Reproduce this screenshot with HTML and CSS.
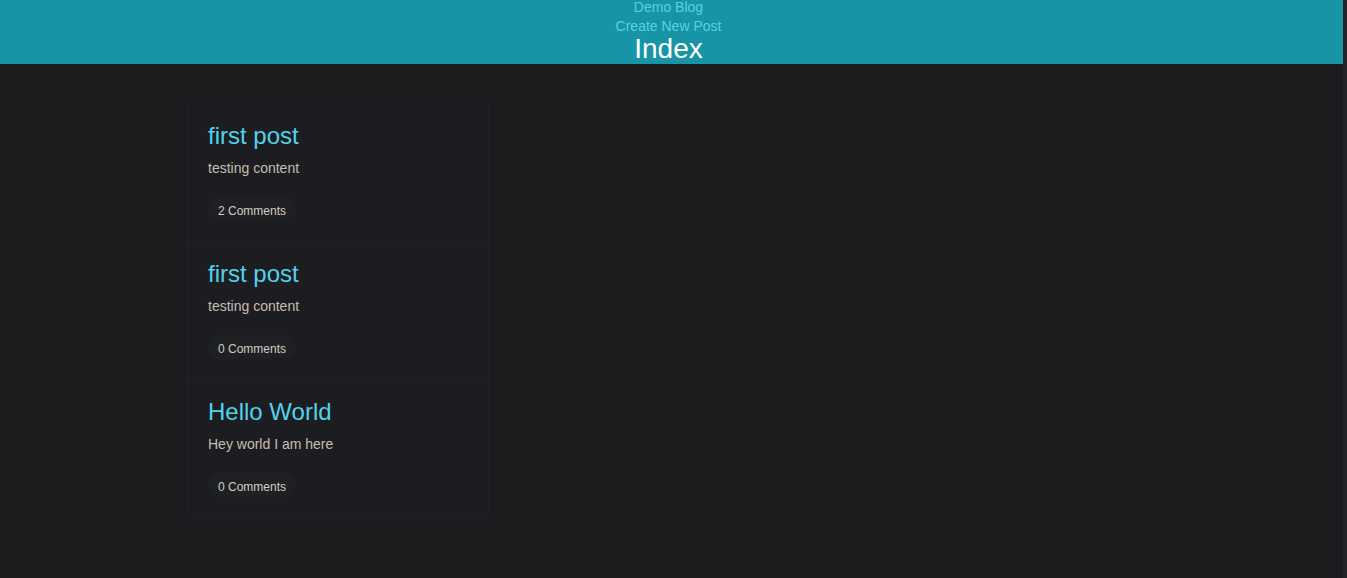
FILE: index.html
```html
<!DOCTYPE html>
<html lang="en">
<head>
<meta charset="utf-8">
<title>Index</title>
<link rel="stylesheet" href="styles.css">
</head>
<body>
<div class="page">
  <header class="site-header">
    <a class="nav-link first" href="#">Demo Blog</a>
    <a class="nav-link" href="#">Create New Post</a>
    <h1 class="page-title">Index</h1>
  </header>
  <main class="content">
    <ul class="post-list">
      <li class="post">
        <a class="post-title" href="#">first post</a>
        <p class="post-body">testing content</p>
        <span class="badge">2 Comments</span>
      </li>
      <li class="post">
        <a class="post-title" href="#">first post</a>
        <p class="post-body">testing content</p>
        <span class="badge">0 Comments</span>
      </li>
      <li class="post">
        <a class="post-title" href="#">Hello World</a>
        <p class="post-body">Hey world I am here</p>
        <span class="badge">0 Comments</span>
      </li>
    </ul>
  </main>
</div>
</body>
</html>
```

FILE: styles.css
```css
html, body {
  margin: 0;
  padding: 0;
  height: 100%;
}

body {
  background: #232427;
  font-family: "Liberation Sans", Arial, sans-serif;
  overflow: hidden;
}

.page {
  margin-right: 4px;
  min-height: 100%;
  background: #1b1c1e;
}

.site-header {
  height: 64px;
  padding-right: 6px;
  background: #1794a5;
  display: flex;
  flex-direction: column;
  align-items: center;
  overflow: hidden;
}

.nav-link {
  font-size: 14px;
  line-height: 19px;
  color: #55d3e6;
  text-decoration: none;
}

.nav-link.first {
  margin-top: -2px;
}

.page-title {
  margin: 0;
  font-size: 28px;
  line-height: 26px;
  font-weight: normal;
  color: #ffffff;
}

.content {
  padding: 39px 0 0 187px;
}

.post-list {
  list-style: none;
  margin: 0;
  padding: 0;
  width: 302px;
  box-sizing: border-box;
  border: 1px solid #1f2023;
  background: #1c1d20;
}

.post {
  display: flex;
  flex-direction: column;
  align-items: flex-start;
  padding: 17px 20px 20px 20px;
  border-top: 1px solid #1f2023;
}

.post:first-child {
  border-top: none;
}

.post-title {
  font-size: 24px;
  line-height: 29px;
  color: #50d3ea;
  text-decoration: none;
}

.post-body {
  margin: 8px 0 19px 0;
  font-size: 14px;
  line-height: 20px;
  color: #c6beb4;
}

.badge {
  display: inline-block;
  box-sizing: border-box;
  height: 24px;
  padding: 2px 10px 0 10px;
  line-height: 24px;
  border-radius: 12px;
  background: #1f2023;
  font-size: 12px;
  color: #d2ccc4;
}
```
